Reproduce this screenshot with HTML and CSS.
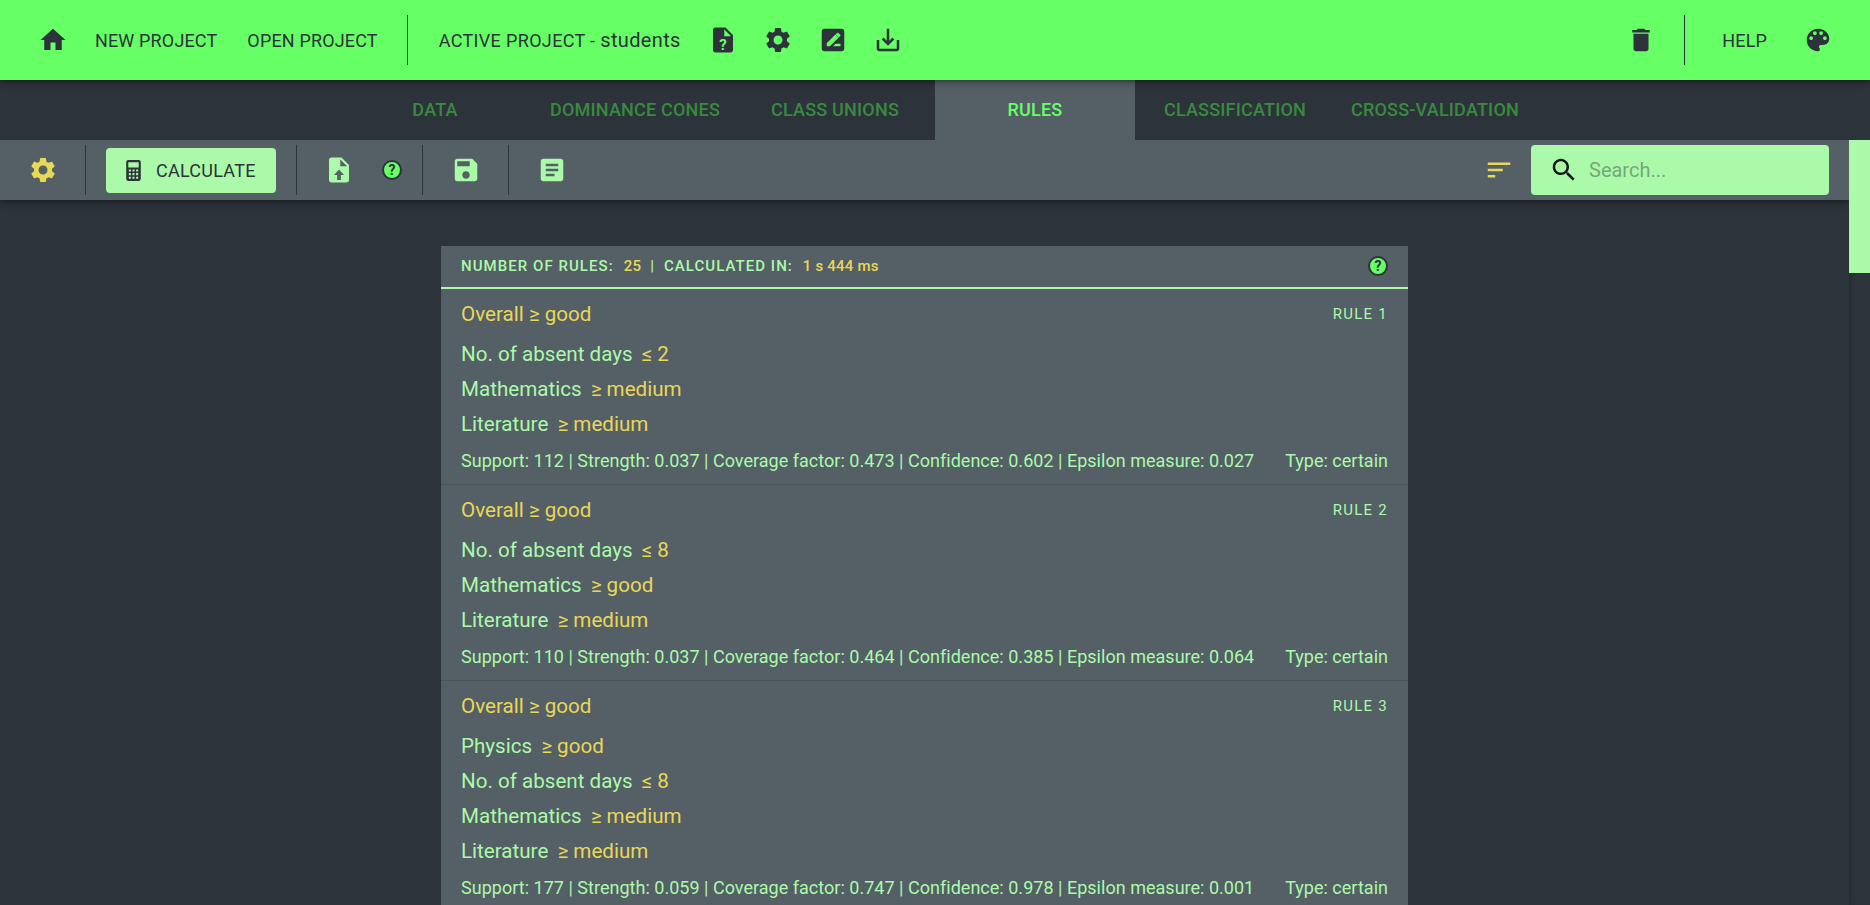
FILE: index.html
```html
<!DOCTYPE html>
<html lang="en">
<head>
  <meta charset="UTF-8">
  <title>RuLeStudio</title>
  <link rel="stylesheet" href="styles.css">
</head>
<body>
  <header class="topbar">
    <button class="icon-btn home"><svg viewBox="0 0 24 24"><path d="M10 20v-6h4v6h5v-8h3L12 3 2 12h3v8z"/></svg></button>
    <a class="text-btn">New Project</a>
    <a class="text-btn">Open Project</a>
    <span class="divider top-divider"></span>
    <span class="active-project">Active Project - <span class="project-name">students</span></span>
    <button class="icon-btn"><svg viewBox="0 0 24 24"><path d="M14 2H6c-1.1 0-2 .9-2 2v16c0 1.1.9 2 2 2h12c1.1 0 2-.9 2-2V8l-6-6zm-1 7V3.5L18.5 9H13z"/><text x="12" y="20" class="file-mark">?</text></svg></button>
    <button class="icon-btn"><svg viewBox="0 0 24 24"><path d="M19.14 12.94c.04-.3.06-.61.06-.94 0-.32-.02-.64-.07-.94l2.03-1.58c.18-.14.23-.41.12-.61l-1.92-3.32c-.12-.22-.37-.29-.59-.22l-2.39.96c-.5-.38-1.03-.7-1.62-.94l-.36-2.54c-.04-.24-.24-.41-.48-.41h-3.84c-.24 0-.43.17-.47.41l-.36 2.54c-.59.24-1.13.57-1.62.94l-2.39-.96c-.22-.08-.47 0-.59.22L2.74 8.87c-.12.21-.08.47.12.61l2.03 1.58c-.05.3-.09.63-.09.94s.02.64.07.94l-2.03 1.58c-.18.14-.23.41-.12.61l1.92 3.32c.12.22.37.29.59.22l2.39-.96c.5.38 1.03.7 1.62.94l.36 2.54c.05.24.24.41.48.41h3.84c.24 0 .44-.17.47-.41l.36-2.54c.59-.24 1.13-.56 1.62-.94l2.39.96c.22.08.47 0 .59-.22l1.92-3.32c.12-.22.07-.47-.12-.61l-2.01-1.58zM12 15.6c-1.98 0-3.6-1.62-3.6-3.6s1.62-3.6 3.6-3.6 3.6 1.62 3.6 3.6-1.62 3.6-3.6 3.6z"/></svg></button>
    <button class="icon-btn"><svg viewBox="0 0 24 24"><path d="M19 3H5c-1.1 0-2 .9-2 2v14c0 1.1.9 2 2 2h14c1.1 0 2-.9 2-2V5c0-1.1-.9-2-2-2zM7 17v-2.5l6.9-6.9 2.5 2.5L9.5 17H7zm10.8-8.2-1.2 1.2-2.5-2.5 1.2-1.2c.26-.26.68-.26.94 0l1.56 1.56c.26.26.26.68 0 .94zM12 17l2-2h4v2h-6z"/></svg></button>
    <button class="icon-btn"><svg viewBox="0 0 24 24"><path d="M19 12v7H5v-7H3v7c0 1.1.9 2 2 2h14c1.1 0 2-.9 2-2v-7h-2zm-6 .67 2.59-2.58L17 11.5l-5 5-5-5 1.41-1.41L11 12.67V3h2z"/></svg></button>
    <span class="spacer"></span>
    <button class="icon-btn"><svg viewBox="0 0 24 24"><path d="M6 19c0 1.1.9 2 2 2h8c1.1 0 2-.9 2-2V7H6v12zM19 4h-3.5l-1-1h-5l-1 1H5v2h14V4z"/></svg></button>
    <span class="divider help-divider"></span>
    <a class="text-btn help">Help</a>
    <button class="icon-btn"><svg viewBox="0 0 24 24"><path d="M12 3c-4.97 0-9 4.03-9 9s4.03 9 9 9c.83 0 1.5-.67 1.5-1.5 0-.39-.15-.74-.39-1.01-.23-.26-.38-.61-.38-.99 0-.83.67-1.5 1.5-1.5H16c2.76 0 5-2.24 5-5 0-4.42-4.03-8-9-8zm-5.5 9c-.83 0-1.5-.67-1.5-1.5S5.67 9 6.5 9 8 9.67 8 10.5 7.33 12 6.5 12zm3-4C8.67 8 8 7.33 8 6.5S8.67 5 9.5 5s1.5.67 1.5 1.5S10.33 8 9.5 8zm5 0c-.83 0-1.5-.67-1.5-1.5S13.67 5 14.5 5s1.5.67 1.5 1.5S15.33 8 14.5 8zm3 4c-.83 0-1.5-.67-1.5-1.5S16.67 9 17.5 9s1.5.67 1.5 1.5-.67 1.5-1.5 1.5z"/></svg></button>
  </header>

  <nav class="tabs">
    <a class="tab">Data</a>
    <a class="tab">Dominance Cones</a>
    <a class="tab">Class Unions</a>
    <a class="tab selected">Rules</a>
    <a class="tab">Classification</a>
    <a class="tab">Cross-Validation</a>
  </nav>

  <div class="workspace">
    <main class="content">
      <div class="toolbar">
        <button class="tool-btn gear"><svg viewBox="0 0 24 24"><path d="M19.14 12.94c.04-.3.06-.61.06-.94 0-.32-.02-.64-.07-.94l2.03-1.58c.18-.14.23-.41.12-.61l-1.92-3.32c-.12-.22-.37-.29-.59-.22l-2.39.96c-.5-.38-1.03-.7-1.62-.94l-.36-2.54c-.04-.24-.24-.41-.48-.41h-3.84c-.24 0-.43.17-.47.41l-.36 2.54c-.59.24-1.13.57-1.62.94l-2.39-.96c-.22-.08-.47 0-.59.22L2.74 8.87c-.12.21-.08.47.12.61l2.03 1.58c-.05.3-.09.63-.09.94s.02.64.07.94l-2.03 1.58c-.18.14-.23.41-.12.61l1.92 3.32c.12.22.37.29.59.22l2.39-.96c.5.38 1.03.7 1.62.94l.36 2.54c.05.24.24.41.48.41h3.84c.24 0 .44-.17.47-.41l.36-2.54c.59-.24 1.13-.56 1.62-.94l2.39.96c.22.08.47 0 .59-.22l1.92-3.32c.12-.22.07-.47-.12-.61l-2.01-1.58zM12 15.6c-1.98 0-3.6-1.62-3.6-3.6s1.62-3.6 3.6-3.6 3.6 1.62 3.6 3.6-1.62 3.6-3.6 3.6z"/></svg></button>
        <span class="divider tool-divider first"></span>
        <button class="calculate">
          <svg viewBox="0 0 24 24"><path d="M7 2c-1.1 0-2 .9-2 2v16c0 1.1.9 2 2 2h10c1.1 0 2-.9 2-2V4c0-1.1-.9-2-2-2H7zm0 2h10v5H7V4zm.5 7h2v2h-2v-2zm3.5 0h2v2h-2v-2zm3.5 0h2v2h-2v-2zm-7 3.5h2v2h-2v-2zm3.5 0h2v2h-2v-2zm3.5 0h2v2h-2v-2zm-7 3.5h2v2h-2v-2zm3.5 0h2v2h-2v-2zm3.5 0h2v2h-2v-2z"/></svg>
          <span>Calculate</span>
        </button>
        <span class="divider tool-divider"></span>
        <button class="tool-btn upload"><svg viewBox="0 0 24 24"><path d="M14 2H6c-1.1 0-2 .9-2 2v16c0 1.1.9 2 2 2h12c1.1 0 2-.9 2-2V8l-6-6zm-1 7V3.5L18.5 9H13zm-1 2.5 4 4.5h-2.5v4h-3v-4H8l4-4.5z"/></svg></button>
        <span class="help-dot tool-help">?</span>
        <span class="divider tool-divider save-divider"></span>
        <button class="tool-btn save"><svg viewBox="0 0 24 24"><path d="M17 3H5c-1.11 0-2 .9-2 2v14c0 1.1.89 2 2 2h14c1.1 0 2-.9 2-2V7l-4-4zm-5 16c-1.66 0-3-1.34-3-3s1.34-3 3-3 3 1.34 3 3-1.34 3-3 3zm3-10H5V5h10v4z"/></svg></button>
        <span class="divider tool-divider notes-divider"></span>
        <button class="tool-btn notes"><svg viewBox="0 0 24 24"><path d="M19 3H5c-1.1 0-2 .9-2 2v14c0 1.1.9 2 2 2h14c1.1 0 2-.9 2-2V5c0-1.1-.9-2-2-2zm-5 14H7v-2h7v2zm3-4H7v-2h10v2zm0-4H7V7h10v2z"/></svg></button>
        <span class="spacer"></span>
        <button class="tool-btn sort"><svg viewBox="0 0 24 24"><path d="M3 18h6v-2H3v2zM3 6v2h18V6H3zm0 7h12v-2H3v2z"/></svg></button>
        <label class="search">
          <svg viewBox="0 0 24 24"><path d="M15.5 14h-.79l-.28-.27C15.41 12.59 16 11.11 16 9.5 16 5.91 13.09 3 9.5 3S3 5.91 3 9.5 5.91 16 9.5 16c1.61 0 3.09-.59 4.23-1.57l.27.28v.79l5 4.99L20.49 19l-4.99-5zm-6 0C7.01 14 5 11.99 5 9.5S7.01 5 9.5 5 14 7.01 14 9.5 11.99 14 9.5 14z"/></svg>
          <input type="text" placeholder="Search...">
        </label>
      </div>

      <section class="rule-list">
        <div class="list-head">
          <span>Number of rules:</span><span class="value">25</span>
          <span class="sep">|</span>
          <span>Calculated in:</span><span class="value">1 s 444 ms</span>
          <span class="spacer"></span>
          <span class="help-dot">?</span>
        </div>

        <article class="rule">
          <div class="rule-head"><span class="decision">Overall ≥ good</span><span class="rule-no">Rule 1</span></div>
          <div class="cond">No. of absent days <b>≤ 2</b></div>
          <div class="cond">Mathematics <b>≥ medium</b></div>
          <div class="cond">Literature <b>≥ medium</b></div>
          <div class="rule-foot"><span>Support: 112 | Strength: 0.037 | Coverage factor: 0.473 | Confidence: 0.602 | Epsilon measure: 0.027</span><span>Type: certain</span></div>
        </article>

        <article class="rule">
          <div class="rule-head"><span class="decision">Overall ≥ good</span><span class="rule-no">Rule 2</span></div>
          <div class="cond">No. of absent days <b>≤ 8</b></div>
          <div class="cond">Mathematics <b>≥ good</b></div>
          <div class="cond">Literature <b>≥ medium</b></div>
          <div class="rule-foot"><span>Support: 110 | Strength: 0.037 | Coverage factor: 0.464 | Confidence: 0.385 | Epsilon measure: 0.064</span><span>Type: certain</span></div>
        </article>

        <article class="rule">
          <div class="rule-head"><span class="decision">Overall ≥ good</span><span class="rule-no">Rule 3</span></div>
          <div class="cond">Physics <b>≥ good</b></div>
          <div class="cond">No. of absent days <b>≤ 8</b></div>
          <div class="cond">Mathematics <b>≥ medium</b></div>
          <div class="cond">Literature <b>≥ medium</b></div>
          <div class="rule-foot"><span>Support: 177 | Strength: 0.059 | Coverage factor: 0.747 | Confidence: 0.978 | Epsilon measure: 0.001</span><span>Type: certain</span></div>
        </article>
      </section>
    </main>
    <div class="scrollbar"><span class="thumb"></span></div>
  </div>
</body>
</html>
```

FILE: styles.css
```css
* { box-sizing: border-box; margin: 0; padding: 0; }
html, body { height: 100%; overflow: hidden; }
body {
  font-family: Roboto, sans-serif;
  background: #2c333a;
  color: #abfaa9;
  display: flex; flex-direction: column;
}
button { background: none; border: none; font-family: inherit; color: inherit; }
svg { width: 30px; height: 30px; fill: currentColor; display: block; }
.spacer { flex: 1; }
.divider { width: 1px; background: #2c333a; flex-shrink: 0; }

/* top app bar */
.topbar {
  height: 80px; flex-shrink: 0;
  background: #66ff66; color: #2c333a;
  display: flex; align-items: center;
  padding: 0 25px;
  position: relative; z-index: 3;
  box-shadow: 0 2px 4px -1px rgba(0,0,0,.2), 0 4px 5px rgba(0,0,0,.14), 0 1px 10px rgba(0,0,0,.12);
}
.icon-btn {
  width: 55px; height: 48px;
  display: flex; align-items: center; justify-content: center;
}
.text-btn {
  padding: 0 15px;
  font-size: 18px; text-transform: uppercase; letter-spacing: .15px;
}
.file-mark { font: 700 12px Roboto, sans-serif; fill: #66ff66; text-anchor: middle; }
.top-divider { height: 50px; margin: 0 15px 0 14px; }
.active-project {
  padding: 0 15px 0 16px;
  font-size: 18px; text-transform: uppercase; letter-spacing: .35px;
}
.project-name { text-transform: none; font-size: 20px; letter-spacing: .35px; }
.help-divider { height: 50px; margin: 0 22px 0 16px; }
.help { margin-right: 8px; }

/* tabs */
.tabs {
  height: 60px; flex-shrink: 0;
  display: flex; justify-content: center;
  background: #2c333a;
  position: relative; z-index: 1;
}
.tab {
  width: 200px; padding-bottom: 2px;
  display: flex; align-items: center; justify-content: center;
  font-size: 18px; font-weight: 500; letter-spacing: .2px;
  text-transform: uppercase;
  color: #398a3f;
}
.tab.selected { background: #545f66; color: #66ff66; }

/* toolbar and page */
.workspace { flex: 1; display: flex; min-height: 0; }
.content { flex: 1; min-width: 0; overflow: hidden; }
.toolbar {
  height: 60px;
  background: #545f66;
  display: flex; align-items: center;
  padding: 0 20px 0 28px;
  position: relative; z-index: 2;
  box-shadow: 0 2px 4px -1px rgba(0,0,0,.2), 0 4px 5px rgba(0,0,0,.14), 0 1px 10px rgba(0,0,0,.12);
}
.tool-btn { width: 30px; height: 30px; flex-shrink: 0; }
.gear, .sort { color: #e9d758; }
.tool-divider { height: 50px; }
.tool-divider.first { margin-left: 27px; }
.calculate {
  width: 170px; height: 45px;
  margin: 0 20px;
  background: #abfaa9; color: #2c333a;
  border-radius: 4px;
  display: flex; align-items: center;
  padding-left: 15px; gap: 10px;
  font-size: 18px; text-transform: uppercase; letter-spacing: .25px;
}
.calculate svg { width: 25px; height: 25px; }
.upload { margin-left: 27px; }
.help-dot {
  width: 20px; height: 20px; flex-shrink: 0;
  border-radius: 50%;
  background: #66ff66; color: #2c333a;
  border: 2px solid #2c333a;
  display: flex; align-items: center; justify-content: center;
  font-size: 14px; font-weight: 700; letter-spacing: 0;
}
.tool-help { margin-left: 28px; }
.save-divider { margin-left: 20px; }
.save { margin-left: 28px; }
.notes-divider { margin-left: 27px; }
.notes { margin-left: 28px; }
.search {
  width: 298px; height: 50px;
  margin-left: 17px;
  background: #abfaa9; color: #10181c;
  border-radius: 4px;
  display: flex; align-items: center;
  padding-left: 18px; gap: 10px;
}
.search input {
  flex: 1; min-width: 0;
  background: none; border: none; outline: none;
  font: 20px Roboto, sans-serif; color: #2c333a;
}
.search input::placeholder { color: #2c333a; opacity: .42; }

/* rule list */
.rule-list {
  width: 967px; margin: 46px auto 0;
  background: #545f66;
}
.list-head {
  height: 43px;
  display: flex; align-items: center;
  padding: 0 20px 1px;
  border-bottom: 2px solid #abfaa9;
  font-size: 15px; font-weight: 500; letter-spacing: 1.05px;
  text-transform: uppercase;
}
.list-head .value { color: #e9d758; text-transform: none; margin-left: 10px; letter-spacing: .2px; }
.list-head .sep { margin: 0 9px; }
.rule {
  height: 196px;
  padding: 12px 20px 0;
  border-bottom: 1px solid #4a545b;
}
.rule:has(.cond:nth-child(5)) { height: 231px; }
.rule-head {
  display: flex; justify-content: space-between; align-items: center;
  height: 26px; margin-bottom: 10px;
}
.decision { font-size: 20.6px; color: #e9d758; }
.rule-no { font-size: 15px; letter-spacing: 1.25px; text-transform: uppercase; }
.cond { height: 35px; line-height: 35px; font-size: 20.6px; }
.cond b { font-weight: 400; color: #e9d758; margin-left: 4px; }
.rule-foot {
  display: flex; justify-content: space-between;
  font-size: 18px; letter-spacing: .02px; margin-top: 8px;
}

/* scrollbar */
.scrollbar {
  width: 21px; flex-shrink: 0;
  background: #2c333a;
  box-shadow: inset 4px 0 4px -2px rgba(0,0,0,.15);
}
.thumb { display: block; height: 133px; background: #abfaa9; }
```
